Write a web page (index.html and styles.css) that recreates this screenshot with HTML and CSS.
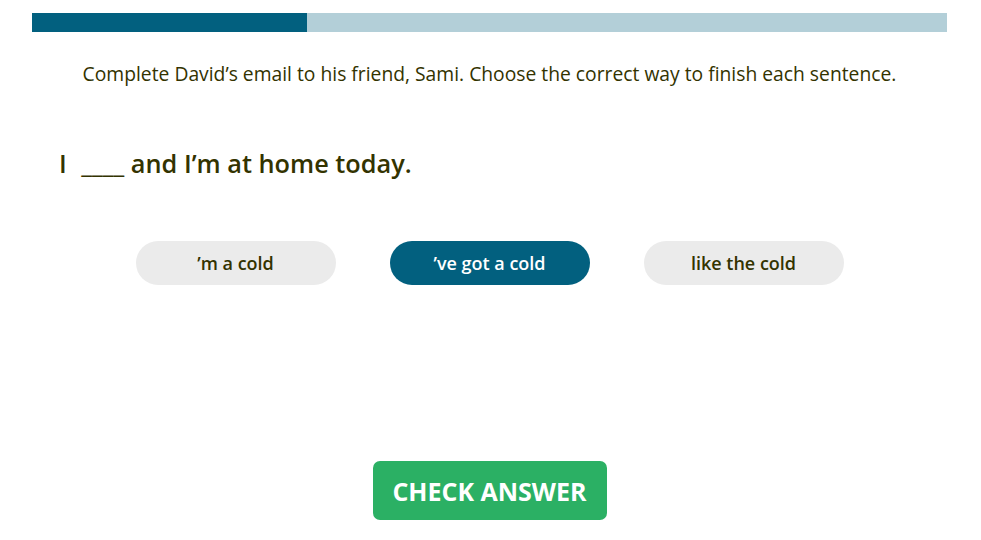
FILE: index.html
```html
<!DOCTYPE html>
<html lang="en">
<head>
    <meta charset="UTF-8">
    <title>Complete the email</title>
    <link rel="stylesheet" href="styles.css">
</head>
<body>
<div class="quiz">
    <div class="progress">
        <div class="progress-fill" style="width: 30%;"></div>
    </div>

    <p class="instructions">Complete David’s email to his friend, Sami. Choose the correct way to finish each sentence.</p>

    <h2 class="sentence">I <span class="blank">____</span> and I’m at home today.</h2>

    <ul class="options">
        <li class="option">’m a cold</li>
        <li class="option selected">’ve got a cold</li>
        <li class="option">like the cold</li>
    </ul>

    <div class="actions">
        <button class="check">Check answer</button>
    </div>
</div>
</body>
</html>
```

FILE: styles.css
```css
body, div, ul, li, p, h2 {
    margin: 0;
    padding: 0;
}

ul {
    list-style-type: none;
}

body {
    background: #fff;
    font-family: "Open Sans", "Liberation Sans", sans-serif;
    color: #333300;
}

.quiz {
    padding: 13px 34px 0 32px;
}

.progress {
    height: 19px;
    background: #b3cfd8;
}

.progress-fill {
    height: 100%;
    background: #02607f;
}

.instructions {
    margin-top: 28px;
    text-align: center;
    font-size: 19.3px;
    line-height: 28px;
}

.sentence {
    margin-top: 59px;
    margin-left: 27px;
    font-size: 25.3px;
    font-weight: 600;
    line-height: 32px;
}

.blank {
    margin-left: 8px;
}

.options {
    display: flex;
    justify-content: center;
    gap: 54px;
    margin-top: 62px;
}

.option {
    width: 200px;
    height: 44px;
    line-height: 44px;
    text-align: center;
    border-radius: 22px;
    background: #ebebeb;
    font-size: 18px;
    font-weight: 600;
    cursor: pointer;
}

.option.selected {
    background: #02607f;
    color: #fff;
}

.actions {
    display: flex;
    justify-content: center;
    margin-top: 176px;
}

.check {
    width: 234px;
    height: 59px;
    border: 0;
    border-radius: 7px;
    background: #2bb064;
    color: #fff;
    font-family: inherit;
    font-size: 25px;
    font-weight: 700;
    text-transform: uppercase;
    cursor: pointer;
}
```
